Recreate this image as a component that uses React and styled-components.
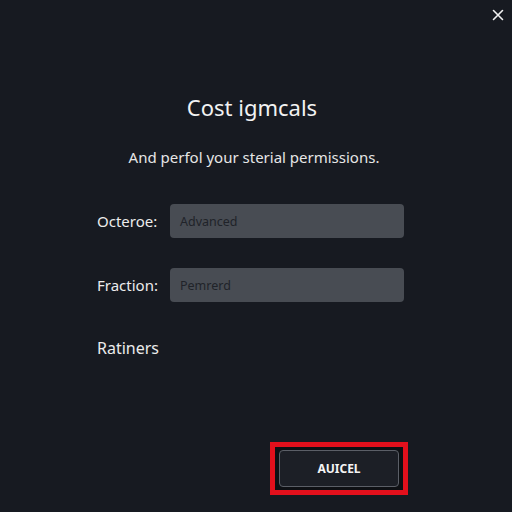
import React from 'react';
import styled, { createGlobalStyle } from 'styled-components';

const GlobalStyle = createGlobalStyle`
    html, body {
        margin: 0;
        padding: 0;
        background-color: #171a21;
    }
    * {
        box-sizing: border-box;
    }
`;

const Dialog = styled('div')`
    width: 512px;
    height: 512px;
    display: flex;
    flex-direction: column;
    background-color: #171a21;
    color: #ececec;
    font-family: "Noto Sans", "Liberation Sans", sans-serif;
`;

const TopBar = styled('div')`
    height: 30px;
    display: flex;
    justify-content: flex-end;
    align-items: center;
    padding-right: 7px;
`;

const CloseButton = styled('button')`
    border: unset;
    background: transparent;
    padding: 0;
    width: 14px;
    height: 14px;
    display: flex;
    align-items: center;
    justify-content: center;
    cursor: pointer;
`;

const Title = styled('h1')`
    margin: 63px 0 0;
    padding-right: 8px;
    font-size: 22px;
    line-height: 28px;
    font-weight: 400;
    text-align: center;
    color: #f2f2f2;
`;

const Subtitle = styled('p')`
    margin: 26px 0 0;
    padding-right: 4px;
    font-size: 15px;
    line-height: 20px;
    text-align: center;
    color: #e6e6e6;
`;

const Form = styled('div')`
    margin: 37px 0 0 97px;
    display: flex;
    flex-direction: column;
    gap: 30px;
`;

const Row = styled('div')`
    display: flex;
    align-items: center;
`;

const Label = styled('label')`
    width: 73px;
    font-size: 15px;
    color: #ececec;
`;

const Field = styled('div')`
    width: 234px;
    height: 34px;
    border-radius: 4px;
    background-color: #484c53;
    display: flex;
    align-items: center;
    padding-left: 10px;
    font-size: 12.5px;
    color: #202329;
`;

const Section = styled('div')`
    margin: 36px 0 0 97px;
    font-size: 16px;
    line-height: 20px;
    color: #ececec;
`;

const Footer = styled('div')`
    margin-top: auto;
    display: flex;
    justify-content: flex-end;
    padding: 0 104px 17px 0;
`;

const Highlight = styled('div')`
    border: 5px solid #e3101c;
    padding: 3px 4px;
    background-color: #0e1014;
`;

const ActionButton = styled('button')`
    width: 120px;
    height: 37px;
    border: 1px solid #5b5f67;
    border-radius: 4px;
    background-color: #1c1f26;
    color: #f4f4f4;
    font-family: "Noto Sans", "Liberation Sans", sans-serif;
    font-size: 12px;
    font-weight: 700;
    cursor: pointer;
`;

const fields = [
    { label: 'Octeroe:', value: 'Advanced' },
    { label: 'Fraction:', value: 'Pemrerd' },
];

export default function App() {
    return (
        <>
            <GlobalStyle />
            <Dialog>
                <TopBar>
                    <CloseButton aria-label="Close">
                        <svg width="12" height="12" viewBox="0 0 12 12">
                            <path d="M1.5 1.5 L10.5 10.5 M10.5 1.5 L1.5 10.5" stroke="#f0f0f0" strokeWidth="1.6" strokeLinecap="round" />
                        </svg>
                    </CloseButton>
                </TopBar>
                <Title>Cost igmcals</Title>
                <Subtitle>And perfol your sterial permissions.</Subtitle>
                <Form>
                    {fields.map((f) => (
                        <Row key={f.label}>
                            <Label>{f.label}</Label>
                            <Field>{f.value}</Field>
                        </Row>
                    ))}
                </Form>
                <Section>Ratiners</Section>
                <Footer>
                    <Highlight>
                        <ActionButton>AUICEL</ActionButton>
                    </Highlight>
                </Footer>
            </Dialog>
        </>
    );
}
